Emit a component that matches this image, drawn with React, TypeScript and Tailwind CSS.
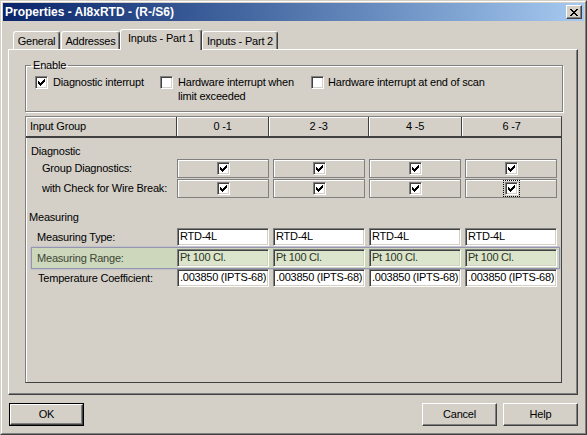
import type { ReactNode } from "react";

const raised =
  "border border-t-white border-l-white border-r-[#404040] border-b-[#404040] shadow-[inset_-1px_-1px_0_#808080]";
const sunken =
  "border border-t-[#808080] border-l-[#808080] border-r-white border-b-white shadow-[inset_1px_1px_0_#404040,inset_-1px_-1px_0_#d4d0c8]";

const Tick = () => (
  <svg width="7" height="7" viewBox="0 0 7 7" shapeRendering="crispEdges">
    <g fill="#000">
      <rect x="6" y="0" width="1" height="1" />
      <rect x="5" y="1" width="2" height="1" />
      <rect x="0" y="2" width="1" height="1" />
      <rect x="4" y="2" width="3" height="1" />
      <rect x="0" y="3" width="2" height="1" />
      <rect x="3" y="3" width="3" height="1" />
      <rect x="0" y="4" width="5" height="1" />
      <rect x="1" y="5" width="3" height="1" />
      <rect x="2" y="6" width="1" height="1" />
    </g>
  </svg>
);

type CheckProps = { checked?: boolean; focus?: boolean };

const Check = ({ checked, focus }: CheckProps) => (
  <span
    className={`flex shrink-0 ${focus ? "outline outline-1 outline-dotted outline-black outline-offset-[1px]" : ""}`}
  >
    <span
      className={`flex h-[13px] w-[13px] items-center justify-center bg-white ${sunken}`}
    >
      {checked && <Tick />}
    </span>
  </span>
);

const CheckCell = ({ focus }: { focus?: boolean }) => (
  <div className="flex h-[19px] w-[92px] items-center justify-center border border-[#808080] shadow-[inset_1px_1px_0_#fff]">
    <Check checked focus={focus} />
  </div>
);

const Field = ({ value, tint }: { value: string; tint?: boolean }) => (
  <div
    className={`h-[18px] w-[92px] overflow-hidden whitespace-nowrap pl-[2px] leading-[15px] tracking-[-0.25px] ${sunken} ${
      tint ? "bg-[#dbe5cb] text-[#2c3426]" : "bg-white text-black"
    }`}
  >
    {value}
  </div>
);

const Button = ({ label, isDefault }: { label: string; isDefault?: boolean }) =>
  isDefault ? (
    <div className="h-[23px] w-[75px] border border-black">
      <div className={`flex h-full w-full items-center justify-center ${raised}`}>
        {label}
      </div>
    </div>
  ) : (
    <div className={`flex h-[23px] w-[75px] items-center justify-center ${raised}`}>
      {label}
    </div>
  );

const Tab = ({ label, width, active }: { label: string; width: string; active?: boolean }) => (
  <div
    className={`flex items-start justify-center rounded-t-[3px] border border-b-0 border-t-white border-l-white border-r-[#404040] bg-[#d4d0c8] shadow-[inset_-1px_0_0_#808080] ${width} ${
      active ? "relative z-10 -mb-px h-[21px] pt-[2px]" : "h-[18px] pt-[3px]"
    }`}
  >
    {label}
  </div>
);

const Row = ({ label, children }: { label: string; children: ReactNode }) => (
  <div className="flex items-center">
    <div className="w-[151px] pl-[16px]">{label}</div>
    <div className="flex gap-[4px]">{children}</div>
  </div>
);

const groups = ["0 -1", "2 -3", "4 -5", "6 -7"];
const groupWidths = ["w-[92px]", "w-[100px]", "w-[93px]", "flex-1"];

export default function App() {
  return (
    <div className="h-[435px] w-[587px] border border-t-[#d4d0c8] border-l-[#d4d0c8] border-r-[#404040] border-b-[#404040] bg-[#d4d0c8] font-['Liberation_Sans',Arial,sans-serif] text-[11px] leading-[13px] tracking-[-0.2px] text-black">
      <div className="h-full w-full border border-t-white border-l-white border-r-[#808080] border-b-[#808080] p-[1px]">
        {/* title bar */}
        <div className="flex h-[18px] items-center justify-between bg-gradient-to-r from-[#0a246a] to-[#a6caf0] pl-[2px] pr-[2px]">
          <span className="text-[12px] font-bold tracking-normal text-white">
            Properties - AI8xRTD - (R-/S6)
          </span>
          <div className={`flex h-[14px] w-[16px] items-center justify-center bg-[#d4d0c8] ${raised}`}>
            <svg width="8" height="7" viewBox="0 0 8 7" shapeRendering="crispEdges">
              <path d="M0 0h2v1h1v1h2V1h1V0h2v1H7v1H6v1H5v1h1v1h1v1h1v1H6V6H5V5H3v1H2v1H0V6h1V5h1V4h1V3H2V2H1V1H0z" fill="#000" />
            </svg>
          </div>
        </div>

        {/* tabs */}
        <div className="mt-[8px] flex h-[20px] items-end pl-[10px]">
          <Tab label="General" width="w-[47px]" />
          <div className="w-[1px]" />
          <Tab label="Addresses" width="w-[59px]" />
          <Tab label="Inputs - Part 1" width="w-[82px]" active />
          <Tab label="Inputs - Part 2" width="w-[76px]" />
        </div>

        {/* panel */}
        <div className="ml-[5px] h-[346px] w-[570px] border border-t-white border-l-white border-r-[#404040] border-b-[#404040] pl-[16px] pt-[9px] shadow-[inset_-1px_-1px_0_#808080]">
          <fieldset className="m-0 w-[538px] border border-[#808080] p-0 shadow-[inset_1px_1px_0_#fff,1px_1px_0_#fff]">
            <legend className="ml-[5px] px-[2px] leading-[13px]">Enable</legend>
            <div className="mt-[4px] flex h-[35px] items-start pl-[9px]">
              <div className="flex w-[125px] items-start gap-[5px]">
                <Check checked />
                <span>Diagnostic interrupt</span>
              </div>
              <div className="flex w-[151px] items-start gap-[5px]">
                <Check />
                <span className="leading-[14px] -mt-px">
                  Hardware interrupt when
                  <br />
                  limit exceeded
                </span>
              </div>
              <div className="flex items-start gap-[4px]">
                <Check />
                <span>Hardware interrupt at end of scan</span>
              </div>
            </div>
          </fieldset>

          {/* grid */}
          <div className="mt-[4px] h-[267px] w-[537px] border border-t-[#808080] border-l-[#808080] border-r-[#404040] border-b-[#404040] shadow-[inset_1px_1px_0_#fff]">
            <div className="flex h-[21px] border-b-2 border-b-[#404040]">
              <div className="flex w-[151px] items-center border-r border-r-[#404040] pl-[4px] shadow-[inset_1px_1px_0_#fff]">
                Input Group
              </div>
              {groups.map((g, i) => (
                <div
                  key={g}
                  className={`flex items-center justify-center shadow-[inset_1px_1px_0_#fff] ${groupWidths[i]} ${
                    i < 3 ? "border-r border-r-[#404040]" : ""
                  }`}
                >
                  {g}
                </div>
              ))}
            </div>

            <div className="mt-[7px] pl-[5px]">Diagnostic</div>
            <div className="mt-[1px]">
              <Row label="Group Diagnostics:">
                <CheckCell />
                <CheckCell />
                <CheckCell />
                <CheckCell />
              </Row>
            </div>
            <div className="mt-[1px]">
              <Row label="with Check for Wire Break:">
                <CheckCell />
                <CheckCell />
                <CheckCell />
                <CheckCell focus />
              </Row>
            </div>

            <div className="mt-[13px] pl-[3px]">Measuring</div>
            <div className="mt-[4px] flex items-center">
              <div className="w-[151px] pl-[11px]">Measuring Type:</div>
              <div className="flex gap-[4px]">
                {groups.map((g) => (
                  <Field key={g} value="RTD-4L" />
                ))}
              </div>
            </div>
            <div className="ml-[5px] mt-[1px] flex h-[22px] w-[529px] items-center border border-[#9494b4] bg-[#cdd7bc] pr-[2px] shadow-[0_0_2px_#a8a8c8]">
              <div className="w-[145px] pl-[5px] text-[#3c4634]">Measuring Range:</div>
              <div className="flex gap-[4px]">
                {groups.map((g) => (
                  <Field key={g} value="Pt 100 Cl." tint />
                ))}
              </div>
            </div>
            <div className="flex items-center">
              <div className="w-[151px] pl-[12px]">Temperature Coefficient:</div>
              <div className="flex gap-[4px]">
                {groups.map((g) => (
                  <Field key={g} value=".003850 (IPTS-68)" />
                ))}
              </div>
            </div>
          </div>
        </div>

        {/* buttons */}
        <div className="mt-[8px] flex items-center justify-between pl-[6px] pr-[6px]">
          <Button label="OK" isDefault />
          <div className="flex gap-[6px]">
            <Button label="Cancel" />
            <Button label="Help" />
          </div>
        </div>
      </div>
    </div>
  );
}
